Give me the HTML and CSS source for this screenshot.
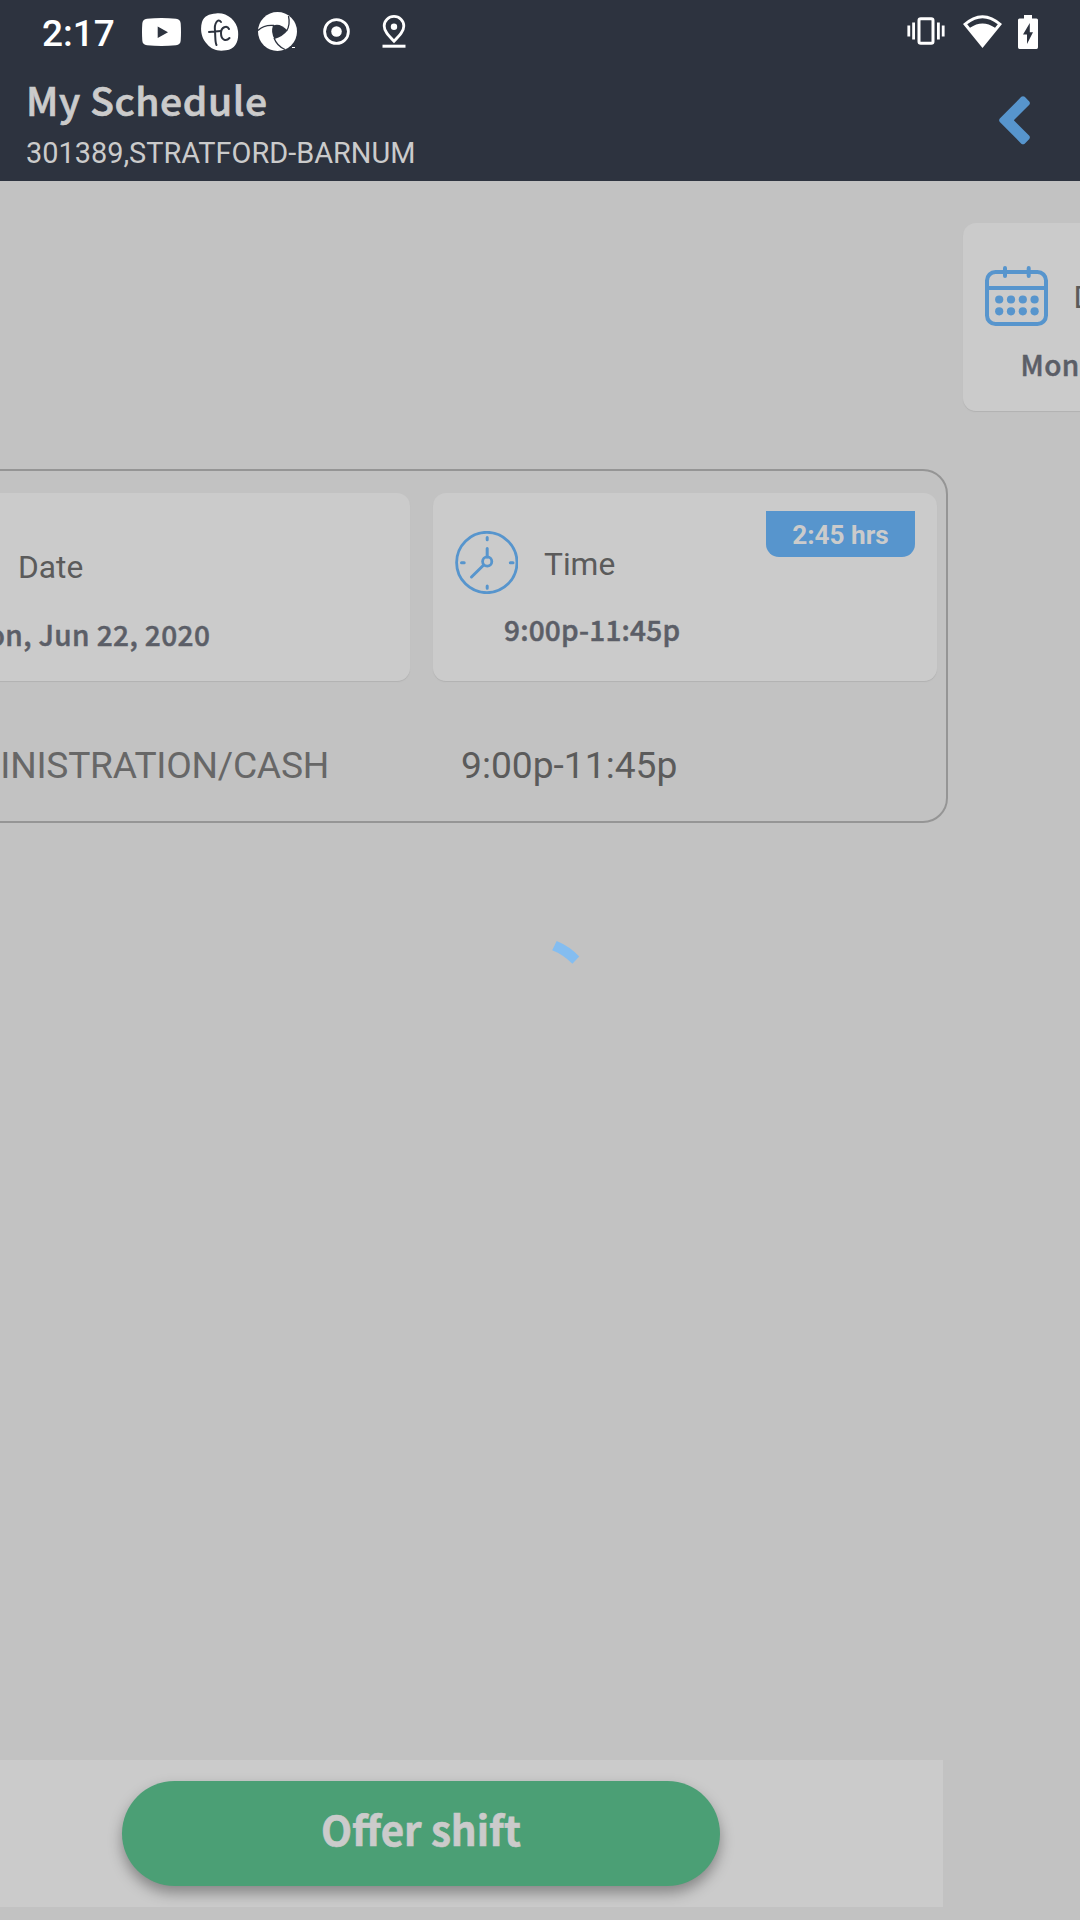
FILE: index.html
```html
<!DOCTYPE html>
<html lang="en">
<head>
<meta charset="utf-8">
<title>My Schedule</title>
<link rel="stylesheet" href="styles.css">
</head>
<body>
<div class="screen">
  <div class="status-bar">
    <span class="clock">2:17</span>
    <div class="status-icons">
      <svg width="39" height="28" viewBox="0 0 39 28"><path fill="#fff" fill-rule="evenodd" d="M5 .7Q19.500-.6 34 .7Q38.500 1.200 38.700 5.500Q39.300 14 38.700 22.500Q38.500 26.800 34 27.300Q19.500 28.600 5 27.300Q.5 26.800.3 22.500Q-.3 14 .3 5.500Q.5 1.200 5 .7ZM15.700 8.500V20L26 14.200Z"/></svg>
      <svg width="38" height="38" viewBox="0 0 38 38"><path fill="#fff" d="M15 .5C25-1 36 7 37 18C38 28 35 36 25 37.300C17 38.500 11 37 6 31C0 25-1 16 1 9C3 3 8 1 15 .5Z"/><g fill="none" stroke="#2d333f" stroke-width="2" stroke-linecap="round"><path d="M20 9C17 5 13 10 14 18C14.500 25 14 29 15.500 32M8 19L20 18"/><path d="M28 16C26 12 20 14 20 20C20 27 25 29 28.500 25"/></g></svg>
      <svg width="39" height="39" viewBox="0 0 39 39"><circle cx="19.500" cy="19.500" r="19.500" fill="#fff"/><path fill="#2d333f" d="M15 13.500Q22 10.500 29.500 18.500Q25 24.500 16.500 27Q12.500 20 15 13.500Z"/><g fill="none" stroke="#2d333f" stroke-width="1.300"><path d="M0 18.500Q6 12.500 16 13.500"/><path d="M30.500 4Q32.500 13 28.500 19"/><path d="M16 26Q19 34 27 37.500"/></g><path stroke="#fff" d="M34 35.500h3"/></svg>
      <svg width="27" height="27" viewBox="0 0 27 27"><circle cx="13.500" cy="13.500" r="11.900" fill="none" stroke="#fff" stroke-width="2.800"/><circle cx="13.500" cy="13.500" r="5.300" fill="#fff"/></svg>
      <svg width="24" height="34" viewBox="0 0 24 34"><path fill="none" stroke="#fff" stroke-width="2.800" d="M12 26.200C6 20 2.200 16 2.200 10.900A9.800 9.500 0 0 1 21.800 10.900C21.800 16 18 20 12 26.200Z"/><circle cx="12" cy="11.800" r="3.200" fill="#fff"/><path stroke="#fff" stroke-width="3" d="M.5 31.200h23"/></svg>
    </div>
    <div class="system-icons">
      <svg width="38" height="28" viewBox="0 0 38 28"><rect x="12" y="1.700" width="14" height="24.600" rx="1.800" fill="none" stroke="#fff" stroke-width="3"/><path stroke="#fff" stroke-width="2.800" d="M1.800 8.500v11M6.600 5.500v17M31.400 5.500v17M36.200 8.500v11"/></svg>
      <svg width="39" height="33" viewBox="0 0 39 33"><path fill="#fff" fill-rule="evenodd" d="M0 9Q19.500-8.500 39 9L19.500 33ZM4.200 9.300L7 12.800Q19.500 4 32 12.800L34.800 9.300Q19.500-2.800 4.200 9.300Z"/></svg>
      <svg width="20" height="34" viewBox="0 0 20 34"><path fill="#fff" fill-rule="evenodd" d="M6 0h8v3.500h4.500Q20 3.500 20 5v27.300Q20 34 18.500 34h-17Q0 34 0 32.300V5Q0 3.500 1.500 3.500H6ZM11.800 8L5 19.500h4V29L15 17.300h-3.200Z"/></svg>
    </div>
  </div>

  <header class="header">
    <div>
      <h1 class="title">My Schedule</h1>
      <p class="store">301389,STRATFORD-BARNUM</p>
    </div>
    <svg class="back" width="31" height="49" viewBox="0 0 31 49"><path d="M22.300.8Q24 -.5 25.700.8L30.300 5.500Q31.500 7.200 30.300 8.700L14.800 24.300L30.300 39.800Q31.500 41.300 30.300 43L25.700 47.700Q24 49 22.300 47.700L.8 26Q-.6 24.300.8 22.500Z" fill="#5795cd"/></svg>
  </header>

  <main class="content">
    <section class="next-day">
      <article class="card date-card">
        <div class="card-head">
          <svg class="card-icon" width="63" height="60" viewBox="0 0 63 60"><g fill="none" stroke="#5795cd" stroke-width="4"><rect x="2" y="6" width="59" height="52" rx="8.500"/><path d="M2 22h59"/><path stroke-linecap="round" d="M20 2v8M43.700 2v8"/></g><g fill="#5795cd"><circle cx="14.200" cy="33.500" r="4.100"/><circle cx="26" cy="33.500" r="4.100"/><circle cx="37.800" cy="33.500" r="4.100"/><circle cx="49.600" cy="33.500" r="4.100"/><circle cx="14.200" cy="45.300" r="4.100"/><circle cx="26" cy="45.300" r="4.100"/><circle cx="37.800" cy="45.300" r="4.100"/><circle cx="49.600" cy="45.300" r="4.100"/></g></svg>
          <span class="label">Date</span>
        </div>
        <p class="value">Mon, Jun 22, 2020</p>
      </article>
    </section>

    <section class="shift">
      <div class="cards">
        <article class="card date-card">
          <div class="card-head">
            <span class="card-icon icon-space"></span>
            <span class="label">Date</span>
          </div>
          <p class="value">Mon, Jun 22, 2020</p>
        </article>
        <article class="card time-card">
          <div class="card-head">
            <svg class="card-icon" width="63" height="63" viewBox="0 0 63 63"><g fill="none" stroke="#5795cd" stroke-width="2.800"><circle cx="31.800" cy="31.500" r="30.200"/><circle cx="32.200" cy="30.500" r="4.600"/><g stroke-linecap="round" stroke-width="3"><path d="M32.200 17.500V26M28.700 34L16.500 46"/><path d="M32.200 6.500v2.300M32.200 55v2.300M6.500 31.800h2.700M55.300 31.800H58"/></g></g></svg>
            <span class="label">Time</span>
          </div>
          <p class="value">9:00p-11:45p</p>
          <span class="badge">2:45 hrs</span>
        </article>
      </div>
      <div class="job">
        <span class="job-name">ADMINISTRATION/CASH</span>
        <span class="job-time">9:00p-11:45p</span>
      </div>
    </section>
  </main>

  <footer class="footer">
    <button class="offer" type="button">Offer shift</button>
  </footer>

  <svg class="spinner" width="28" height="24" viewBox="0 0 28 24"><path fill="#84bdf0" d="M4.700 0Q18 5.500 27.200 15.500L20.400 22.800Q11 13.500.2 9.300Z"/></svg>
</div>
</body>
</html>
```
FILE: styles.css
```css
* { box-sizing: border-box; }

body {
  margin: 0;
  background: #c2c2c2;
}

svg { display: block; flex: none; }
h1, p { margin: 0; font-weight: normal; }

.screen {
  position: relative;
  display: flex;
  flex-direction: column;
  width: 1080px;
  height: 1920px;
  overflow: hidden;
  background: #c2c2c2;
  font-family: Roboto, sans-serif;
  color: #5b5b5b;
  white-space: nowrap;
}

.status-bar {
  display: flex;
  align-items: center;
  height: 63px;
  padding: 0 42px 0 42px;
  background: #2d333f;
}

.clock {
  width: 100px;
  padding-top: 4px;
  font-size: 37px;
  font-weight: 500;
  line-height: 44px;
  color: #fff;
}

.status-icons { display: flex; align-items: center; }
.status-icons svg:nth-child(2) { margin-left: 20px; }
.status-icons svg:nth-child(3) { margin-left: 19px; }
.status-icons svg:nth-child(4) { margin-left: 26px; }
.status-icons svg:nth-child(5) { margin-left: 32px; }

.system-icons { display: flex; align-items: center; margin-left: auto; }
.system-icons svg:nth-child(1) { margin-bottom: 1px; }
.system-icons svg:nth-child(2) { margin-left: 18px; }
.system-icons svg:nth-child(3) { margin-left: 16px; }

.header {
  display: flex;
  justify-content: space-between;
  align-items: flex-start;
  height: 118px;
  padding: 10px 50px 0 26px;
  background: #2d333f;
  color: #cbcbcb;
}

.title {
  padding-top: 1px;
  font: 500 39px/50px "Noto Sans CJK SC", sans-serif;
  letter-spacing: .6px;
  -webkit-text-stroke: .7px currentColor;
}

.store {
  padding-top: 9px;
  font-size: 28.9px;
  line-height: 40px;
}

.back { margin-top: 23px; }

.content { flex: 1; }

.next-day { padding: 42px 0 0 962.5px; }

.card {
  position: relative;
  width: 504px;
  height: 188px;
  padding-left: 22px;
  border-radius: 13px;
  background: #cbcbcb;
  box-shadow: 0 1px 1px #b2b2b2;
}

.card-head { display: flex; align-items: center; }
.card-icon { margin-right: 26px; }
.icon-space { width: 63px; height: 60px; }
.label { font-size: 31.7px; line-height: 40px; }

.value {
  padding-left: 35px;
  color: #5b5e67;
  font: 500 28px/40px "Noto Sans CJK SC", sans-serif;
  letter-spacing: .2px;
  -webkit-text-stroke: .5px currentColor;
}

.date-card { padding-top: 43px; }
.date-card .label { padding-top: 4px; }
.shift .date-card .label { padding-left: 1px; }
.date-card .value { padding: 18px 0 0 36px; letter-spacing: .4px; }
.time-card { padding-top: 38px; }
.time-card .label { padding-top: 5px; }
.time-card .value { padding: 15px 0 0 49px; }

.badge {
  position: absolute;
  top: 18px;
  right: 22px;
  width: 149px;
  height: 46px;
  border-radius: 0 0 13px 13px;
  background: #5795cd;
  color: #cbcbcb;
  font-size: 26.2px;
  font-weight: 700;
  line-height: 48px;
  text-align: center;
}

.shift {
  width: 1053px;
  height: 354px;
  margin: 58px 0 0 -105px;
  padding: 22px 8px 0 9px;
  border: 2px solid #959595;
  border-radius: 25px;
}

.cards { display: flex; gap: 23px; }

.job {
  display: flex;
  padding-top: 64px;
  font-size: 37.2px;
  line-height: 40px;
}

.job-name {
  width: 423px;
  margin-right: 132px;
  color: #676767;
  letter-spacing: -.25px;
  text-align: right;
}

.footer {
  width: 1044px;
  height: 147px;
  margin: 0 0 13px -101px;
  padding-top: 21px;
  overflow: hidden;
  background: #cbcbcb;
}

.offer {
  display: block;
  width: 598px;
  height: 105px;
  margin: 0 auto;
  padding: 0 0 9px;
  border: 0;
  border-radius: 53px;
  background: #4b9f75;
  box-shadow: 0 7px 14px rgba(0, 0, 0, .34);
  color: #cbcbcb;
  font: 700 40.4px/60px "Noto Sans CJK SC", sans-serif;
  -webkit-text-stroke: .6px currentColor;
}

.spinner {
  position: absolute;
  top: 941px;
  left: 552px;
}
```
